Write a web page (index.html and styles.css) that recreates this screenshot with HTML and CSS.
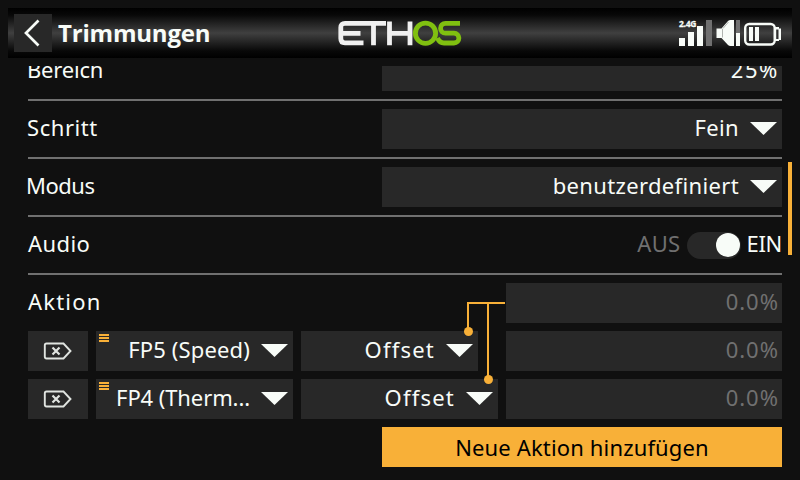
FILE: index.html
```html
<!DOCTYPE html>
<html lang="de">
<head>
<meta charset="utf-8">
<title>Trimmungen</title>
<link rel="stylesheet" href="styles.css">
</head>
<body>
<header class="topbar">
  <button class="back" aria-label="Zurück"><svg width="38" height="38" viewBox="0 0 38 38"><path d="M24.500 6.500 12 19 24.500 31.500" fill="none" stroke="#f8fcf8" stroke-width="2.700"/></svg></button>
  <h1 class="title">Trimmungen</h1>
  <svg class="logo" width="124" height="26" viewBox="0 0 124 26" fill="none" stroke-width="4.800">
    <g stroke="#f0f0f0"><path d="M48 3.300H7Q2.800 3.300 2.800 7.500V18.500Q2.800 22.900 7 22.900H25.500M3 13.300H22.500M35.500 3.300V25.200M51.500 1.500V25.200M51.500 13.300H72M72 1.500V25.200"/></g>
    <g stroke="#80c010"><circle cx="87.500" cy="13.200" r="10.100"/><path d="M122 3.300H107.500A4.900 4.900 0 0 0 107.500 13.200H116A4.900 4.900 0 0 1 116 23H106Q101.500 23 99.500 18"/></g>
  </svg>
  <svg class="status" width="104" height="28" viewBox="0 0 104 28">
    <text class="band" x="1" y="7.500">2.4G</text>
    <g fill="#f8fcf8"><path d="M1 19h6v8H1zM10 13h6v14h-6zM19 7h6v20h-6zM58 14h4v13h-4z"/><path d="M38.500 9.500H43.500L50 2Q51 1 52.500 1H56V27H52.500Q51 27 50 26L43.500 19H38.500z"/></g>
    <path d="M28 1h6v26h-6zM58 1h4v13h-4z" fill="#707070"/>
    <path d="M44.500 10V18.500M45 9.500 50.500 3" stroke="#b0b4b0" fill="none"/>
    <rect x="67.200" y="5" width="29.500" height="20.500" rx="4" fill="none" stroke="#f8fcf8" stroke-width="2.400"/>
    <path d="M97 8H101V9.500H103V21H101V22H97zM71 8h4v14h-4zM77 8h4v14h-4z" fill="#f8fcf8"/>
    <path d="M98.200 10.500h2.300v9.500H98.200z" fill="#303030"/>
  </svg>
</header>
<main class="viewport">
  <div class="list">
    <div class="row"><span class="label bereich">Bereich</span><div class="field num">25%</div></div>
    <div class="row"><span class="label schritt">Schritt</span><div class="field pick"><span>Fein</span><i class="arrow"></i></div></div>
    <div class="row"><span class="label modus">Modus</span><div class="field pick"><span>benutzerdefiniert</span><i class="arrow"></i></div></div>
    <div class="row"><span class="label audio">Audio</span><div class="switch"><span class="off">AUS</span><span class="track"><i class="knob"></i></span><span class="on">EIN</span></div></div>
    <div class="actions">
      <span class="label head">Aktion</span><div class="field dim">0.0%</div>
      <button class="field del" aria-label="Löschen"><svg width="30" height="20" viewBox="0 0 30 20"><use href="#tag"/></svg></button>
      <div class="field pick mode"><i class="menu"></i><span>FP5 (Speed)</span><i class="arrow"></i></div>
      <div class="field pick offset short"><span>Offset</span><i class="arrow"></i></div>
      <div class="field dim">0.0%</div>
      <button class="field del" aria-label="Löschen"><svg width="30" height="20" viewBox="0 0 30 20"><use href="#tag"/></svg></button>
      <div class="field pick mode long"><i class="menu"></i><span>FP4 (Therm...</span><i class="arrow"></i></div>
      <div class="field pick offset"><span>Offset</span><i class="arrow"></i></div>
      <div class="field dim">0.0%</div>
      <svg class="links" width="44" height="86" viewBox="0 0 44 86"><path d="M42 3H5V31M25 3V79" fill="none" stroke="#f8b038" stroke-width="2"/><circle cx="5.500" cy="31.500" r="4.500"/><circle cx="25.500" cy="79.500" r="4.500"/></svg>
    </div>
    <button class="add">Neue Aktion hinzufügen</button>
  </div>
  <i class="scroll"></i>
</main>
<svg width="0" height="0" class="defs"><defs><g id="tag" fill="none" stroke="#e0e4e0" stroke-width="1.900"><path d="M3.500 2.500H20.500L27.500 10 20.500 17.500H3.500Q1.800 17.500 1.800 15.800V4.200Q1.800 2.500 3.500 2.500z"/><path d="M9.500 6.500 16.500 13.500M16.500 6.500 9.500 13.500" stroke-width="2.200"/></g></defs></svg>
</body>
</html>
```
FILE: styles.css
```css
* { box-sizing: border-box; }
body { margin: 0; width: 800px; height: 480px; padding: 8px 8px 0; overflow: hidden; background: #101010; color: #f8fcf8; font: 22px/36px "Noto Sans", sans-serif; letter-spacing: .35px; }
button { border: 0; padding: 0; color: inherit; font: inherit; letter-spacing: inherit; }
svg { display: block; }
.defs { position: absolute; }
.topbar { height: 50px; display: grid; grid-template-columns: 38px 286px 124px 1fr; align-items: center; padding: 0 10px 0 6px; background: linear-gradient(#000, #080808 14%, #404040 50%, #080808 86%, #000); }
.back { width: 38px; height: 38px; background: #282828; }
.title { margin: 0 0 0 6px; font: 700 24px/48px "Open Sans", sans-serif; letter-spacing: -.2px; }
.status { justify-self: end; }
.band { font: 700 8.5px "Open Sans", sans-serif; letter-spacing: -.3px; fill: #f8fcf8; stroke: #f8fcf8; stroke-width: .3px; }
.viewport { height: 414px; margin-top: 8px; overflow: hidden; display: grid; grid-template-columns: 754px 4px; column-gap: 6px; padding-left: 20px; }
.list { margin-top: -15px; }
.row { height: 50px; padding-bottom: 8px; margin-bottom: 8px; border-bottom: 2px solid #707070; display: flex; justify-content: space-between; }
.label { margin-left: -1px; }
.bereich { letter-spacing: -.2px; }
.schritt { letter-spacing: .55px; }
.modus { letter-spacing: -.5px; margin-left: -2px; }
.audio { letter-spacing: .4px; margin-left: 0; }
.head { grid-column: 1 / 4; letter-spacing: 1.2px; margin-left: 0; }
.field { height: 40px; background: #282828; white-space: nowrap; }
.row .field { width: 400px; }
.num, .dim { text-align: right; letter-spacing: 1px; padding-right: 3px; }
.num { letter-spacing: 1.6px; }
.dim { color: #707070; }
.pick { display: flex; justify-content: flex-end; align-items: flex-start; padding-right: 5px; }
.arrow { width: 27px; height: 13px; margin: 13px 0 0 11px; background: #f8fcf8; clip-path: polygon(0 0, 100% 0, 50% 100%); }
.switch { height: 40px; display: flex; align-items: center; letter-spacing: 0; }
.off, .on { margin-top: -4px; }
.off { color: #707070; letter-spacing: .3px; }
.on { letter-spacing: -.3px; }
.track { width: 54px; height: 27px; margin: 0 5px 0 7px; border-radius: 14px; background: #282828; display: flex; justify-content: flex-end; align-items: center; padding-right: 1px; }
.knob { width: 24px; height: 24px; border-radius: 50%; background: #f8fcf8; }
.actions { position: relative; display: grid; grid-template-columns: 60px 197px 197px 276px; gap: 8px; }
.del { display: grid; place-items: center; }
.offset { letter-spacing: 1.2px; }
.short { width: 177px; }
.mode { letter-spacing: .15px; }
.long { letter-spacing: -.1px; }
.menu { margin: 3px auto 0 3px; width: 10px; height: 8px; background: repeating-linear-gradient(#f8b038 0 2px, #282828 2px 3px); }
.links { position: absolute; left: 435px; top: 17px; fill: #f8b038; }
.add { display: block; width: 400px; height: 40px; margin: 8px 0 0 auto; background: #f8b038; color: #000; letter-spacing: .15px; }
.scroll { height: 93px; margin-top: 96px; background: #f8b038; }
```
